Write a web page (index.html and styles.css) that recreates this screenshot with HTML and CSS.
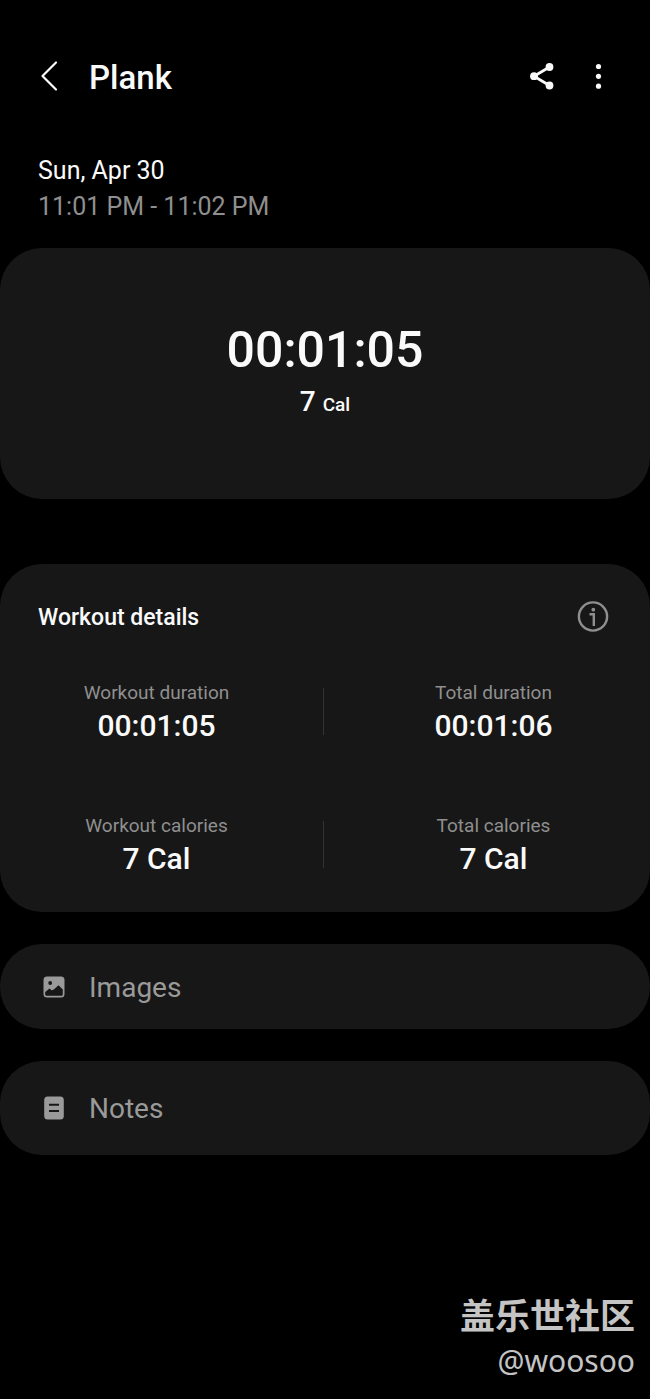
FILE: index.html
```html
<!DOCTYPE html>
<html lang="en">
<head>
<meta charset="utf-8">
<meta name="viewport" content="width=device-width, initial-scale=1">
<title>Plank</title>
<link rel="stylesheet" href="styles.css">
</head>
<body>
<div class="page">
  <header class="topbar">
    <button class="icon-button" type="button" aria-label="Back">
      <svg width="24" height="32" viewBox="0 0 24 32" fill="none" stroke="currentColor" stroke-width="2.2" stroke-linecap="round" stroke-linejoin="round"><path d="M18 2.500L4.500 16L18 29.500"/></svg>
    </button>
    <h1 class="title">Plank</h1>
    <button class="icon-button" type="button" aria-label="Share">
      <svg width="28" height="30" viewBox="0 0 28 30" fill="currentColor"><path d="M21.500 6L6 15.200L21.500 24.500" fill="none" stroke="currentColor" stroke-width="2.800"/><circle cx="21.500" cy="6" r="3.900"/><circle cx="6" cy="15.200" r="3.900"/><circle cx="21.500" cy="24.500" r="3.900"/></svg>
    </button>
    <button class="icon-button" type="button" aria-label="More options">
      <svg width="12" height="30" viewBox="0 0 12 30" fill="currentColor"><circle cx="6.500" cy="5.500" r="2.600"/><circle cx="6.500" cy="15.300" r="2.600"/><circle cx="6.500" cy="25.200" r="2.600"/></svg>
    </button>
  </header>

  <main class="content">
    <section class="when">
      <p class="date">Sun, Apr 30</p>
      <p class="time">11:01 PM - 11:02 PM</p>
    </section>

    <section class="card summary">
      <p class="summary-time">00:01:05</p>
      <p class="summary-cal">7 <span class="unit">Cal</span></p>
    </section>

    <section class="card details">
      <div class="details-head">
        <h2 class="details-title">Workout details</h2>
        <button class="icon-button info" type="button" aria-label="Information">
          <svg width="32" height="32" viewBox="0 0 32 32" fill="none" stroke="currentColor" stroke-width="2.400"><circle cx="16" cy="15.500" r="14.100"/><path d="M12.500 13.200H16.800V25"/><circle cx="16.300" cy="8.700" r="1.900" fill="currentColor" stroke="none"/></svg>
        </button>
      </div>
      <dl class="stats">
        <div class="stat"><dt>Workout duration</dt><dd>00:01:05</dd></div>
        <div class="stat"><dt>Total duration</dt><dd>00:01:06</dd></div>
        <div class="stat"><dt>Workout calories</dt><dd>7 Cal</dd></div>
        <div class="stat"><dt>Total calories</dt><dd>7 Cal</dd></div>
      </dl>
    </section>

    <button class="card row images" type="button">
      <svg width="22" height="22" viewBox="0 0 22 22"><rect x="0.500" y="0.500" width="21" height="21" rx="3.500" fill="#9a9a9a"/><circle cx="7.200" cy="7" r="1.900" fill="#171717"/><path d="M2.200 16L6.500 12.500L8.500 14.200L10.500 13.800L15.500 9.200L19.800 13.500V18.500Q19.800 19.800 18.500 19.800H3.500Q2.200 19.800 2.200 18.500Z" fill="#171717"/></svg>
      <span class="row-label">Images</span>
    </button>
    <button class="card row notes" type="button">
      <svg width="22" height="24" viewBox="0 0 22 24"><rect x="1.200" y="0.500" width="19.600" height="23" rx="3.500" fill="#9a9a9a"/><path d="M6 8.700H16M6 15H16" stroke="#171717" stroke-width="1.900"/></svg>
      <span class="row-label">Notes</span>
    </button>
  </main>

  <footer class="credit">
    <p class="community" lang="zh">盖乐世社区</p>
    <p class="author">@woosoo</p>
  </footer>
</div>
</body>
</html>
```
FILE: styles.css
```css
* {
  box-sizing: border-box;
}

body {
  margin: 0;
  background: #000;
  color: #fafafa;
  font-family: Roboto, "Noto Sans CJK SC", sans-serif;
}

h1, h2, p, dl, dd {
  margin: 0;
}

button {
  border: 0;
  padding: 0;
  background: none;
  color: inherit;
  font: inherit;
  cursor: pointer;
}

svg {
  display: block;
}

.page {
  display: flex;
  flex-direction: column;
  min-height: 100vh;
}

.topbar {
  display: flex;
  align-items: center;
  padding: 55px 46px 0 38px;
  height: 97px;
}

.title {
  flex: 1;
  margin-left: 27px;
  padding-top: 3px;
  font-size: 33px;
  font-weight: 500;
  line-height: 39px;
}

.topbar .icon-button + .icon-button {
  margin-left: 36px;
}

.content {
  display: flex;
  flex-direction: column;
}

.when {
  padding: 56px 38px 23px;
  font-size: 25px;
  line-height: 36px;
}

.time {
  color: #8f8f8f;
}

.card {
  border-radius: 42px;
  background: #171717;
}

.summary {
  padding: 72px 38px 74px;
  text-align: center;
  font-weight: 500;
}

.summary-time {
  font-size: 50px;
  line-height: 60px;
}

.summary-cal {
  padding-top: 2px;
  font-size: 28px;
  line-height: 40px;
}

.unit {
  font-size: 19px;
}

.details {
  margin-top: 65px;
  padding: 37px 0 34px;
}

.details-head {
  display: flex;
  align-items: center;
  justify-content: space-between;
  padding: 0 41px 0 38px;
}

.details-title {
  padding-top: 2px;
  font-size: 23px;
  font-weight: 500;
  line-height: 30px;
}

.info {
  color: #8f8f8f;
}

.stats {
  display: grid;
  grid-template-columns: 1fr 1fr;
  row-gap: 67px;
  padding: 46px 0 0;
}

.stat {
  position: relative;
  padding-right: 12px;
  text-align: center;
}

.stat:nth-child(even) {
  padding: 0 0 0 12px;
}

.stat:nth-child(odd)::after {
  content: "";
  position: absolute;
  right: 1px;
  top: 9px;
  bottom: 10px;
  width: 1px;
  background: #333;
}

.stat dt {
  color: #8f8f8f;
  font-size: 19px;
  line-height: 28px;
}

.stat dd {
  font-size: 30px;
  font-weight: 500;
  line-height: 38px;
}

.row {
  display: flex;
  align-items: center;
  gap: 24px;
  margin-top: 32px;
  padding: 0 43px;
  color: #9a9a9a;
  font-size: 28px;
  line-height: 36px;
  text-align: left;
}

.row-label {
  padding-top: 2px;
}

.images {
  height: 85px;
}

.notes {
  height: 94px;
}

.credit {
  margin-top: auto;
  padding: 0 15px 16px;
  color: #c4c4c4;
  text-align: right;
}

.community {
  font-family: "Noto Sans CJK SC", sans-serif;
  font-size: 35px;
  font-weight: 700;
  line-height: 46px;
}

.author {
  padding-top: 2px;
  font-family: "Noto Sans", sans-serif;
  font-size: 30px;
  line-height: 44px;
}
```
